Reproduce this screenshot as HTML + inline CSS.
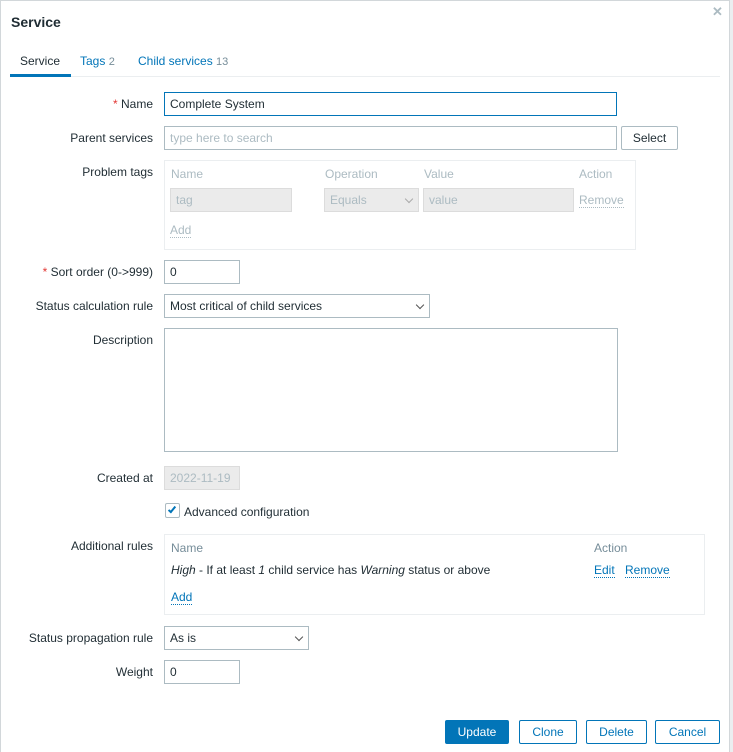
<!DOCTYPE html>
<html><head><meta charset="utf-8"><style>
*{box-sizing:border-box;margin:0;padding:0}
body{width:733px;height:752px;overflow:hidden;background:#ebeef0;font-family:"Liberation Sans",Arial,sans-serif;font-size:12px;color:#1f2c33;position:relative}
#dlg{position:absolute;left:0;top:0;width:730px;height:752px;background:#fff;box-shadow:inset 1px 1px 0 #d2d7da,inset -1px 0 0 #d2d7da}
#c{position:absolute;left:1px;top:1px;width:729px;height:751px}
.a{position:absolute}
.lbl{position:absolute;right:577px;text-align:right;white-space:nowrap;color:#1f2c33}
.req:before{content:"* ";color:#e33734}
.in{position:absolute;border:1px solid #acbbc2;background:#fff;height:24px;line-height:22px;padding-left:5px;white-space:nowrap}
.dis{background:#ebebeb;border-color:#dcdcdc;color:#acbbc2}
.sel:after{content:"";position:absolute;right:6px;top:7px;width:5px;height:5px;border-right:1.3px solid #555;border-bottom:1.3px solid #555;transform:rotate(45deg)}
.sel.dis:after{border-color:#aaa}
.box{position:absolute;border:1px solid #ebeef0}
.gh{color:#768d99}
.lnk{color:#0275b8;border-bottom:1px dotted #0275b8}
.btn{position:absolute;top:719px;height:24px;border:1px solid #0275b8;color:#0275b8;background:#fff;text-align:center;line-height:22px;border-radius:2px}
</style></head><body>
<div id="dlg"><div id="c">
<div class="a" style="left:10px;top:13px;font-size:14px;font-weight:bold;color:#1f2c33">Service</div>
<div class="a" style="left:711px;top:3px;color:#acbbc2;font-size:13px;font-weight:bold">✕</div>
<div class="a" style="left:9px;top:75px;width:710px;height:1px;background:#ebeef0"></div>
<div class="a" style="left:9px;top:73px;width:61px;height:3px;background:#0275b8"></div>
<div class="a" style="left:19px;top:53px">Service</div>
<div class="a" style="left:79px;top:53px;color:#0275b8">Tags <span style="color:#768d99;font-size:11px">2</span></div>
<div class="a" style="left:137px;top:53px;color:#0275b8">Child services <span style="color:#768d99;font-size:11px">13</span></div>

<div class="lbl req" style="top:96px">Name</div>
<div class="in" style="left:163px;top:91px;width:453px;border-color:#0275b8">Complete System</div>

<div class="lbl" style="top:130px">Parent services</div>
<div class="in" style="left:163px;top:125px;width:453px;color:#acbbc2">type here to search</div>
<div class="in" style="left:620px;top:125px;width:57px;padding:0;text-align:center;border-color:#acbbc2;border-radius:2px">Select</div>

<div class="lbl" style="top:164px">Problem tags</div>
<div class="box" style="left:163px;top:159px;width:472px;height:90px"></div>
<div class="a" style="left:170px;top:166px;color:#acbbc2">Name</div>
<div class="a" style="left:324px;top:166px;color:#acbbc2">Operation</div>
<div class="a" style="left:423px;top:166px;color:#acbbc2">Value</div>
<div class="a" style="left:578px;top:166px;color:#acbbc2">Action</div>
<div class="in dis" style="left:169px;top:187px;width:122px">tag</div>
<div class="in dis sel" style="left:323px;top:187px;width:95px">Equals</div>
<div class="in dis" style="left:422px;top:187px;width:151px">value</div>
<div class="a" style="left:578px;top:192px;color:#acbbc2;border-bottom:1px dotted #acbbc2">Remove</div>
<div class="a" style="left:169px;top:222px;color:#acbbc2;border-bottom:1px dotted #acbbc2">Add</div>

<div class="lbl req" style="top:264px">Sort order (0-&gt;999)</div>
<div class="in" style="left:163px;top:259px;width:76px">0</div>

<div class="lbl" style="top:298px">Status calculation rule</div>
<div class="in sel" style="left:163px;top:293px;width:266px">Most critical of child services</div>

<div class="lbl" style="top:332px">Description</div>
<div class="in" style="left:163px;top:327px;width:454px;height:124px"></div>

<div class="lbl" style="top:470px">Created at</div>
<div class="in dis" style="left:163px;top:465px;width:76px;color:#acbbc2;border-color:#dcdcdc">2022-11-19</div>

<div class="a" style="left:164px;top:502px;width:15px;height:15px;border:1px solid #acbbc2;border-radius:2px"></div>
<div class="a" style="left:169px;top:504px;width:4px;height:8px;border-right:2px solid #0275b8;border-bottom:2px solid #0275b8;transform:rotate(40deg)"></div>
<div class="a" style="left:183px;top:504px">Advanced configuration</div>

<div class="lbl" style="top:538px">Additional rules</div>
<div class="box" style="left:163px;top:533px;width:541px;height:81px"></div>
<div class="a gh" style="left:170px;top:540px">Name</div>
<div class="a gh" style="left:593px;top:540px">Action</div>
<div class="a" style="left:170px;top:562px"><i>High</i> - If at least <i>1</i> child service has <i>Warning</i> status or above</div>
<div class="a lnk" style="left:593px;top:562px">Edit</div>
<div class="a lnk" style="left:624px;top:562px">Remove</div>
<div class="a lnk" style="left:170px;top:589px">Add</div>

<div class="lbl" style="top:630px">Status propagation rule</div>
<div class="in sel" style="left:163px;top:625px;width:145px">As is</div>

<div class="lbl" style="top:664px">Weight</div>
<div class="in" style="left:163px;top:659px;width:76px">0</div>

<div class="btn" style="left:444px;width:64px;background:#0275b8;color:#fff">Update</div>
<div class="btn" style="left:518px;width:58px">Clone</div>
<div class="btn" style="left:585px;width:61px">Delete</div>
<div class="btn" style="left:654px;width:65px">Cancel</div>
</div></div>
</body></html>
